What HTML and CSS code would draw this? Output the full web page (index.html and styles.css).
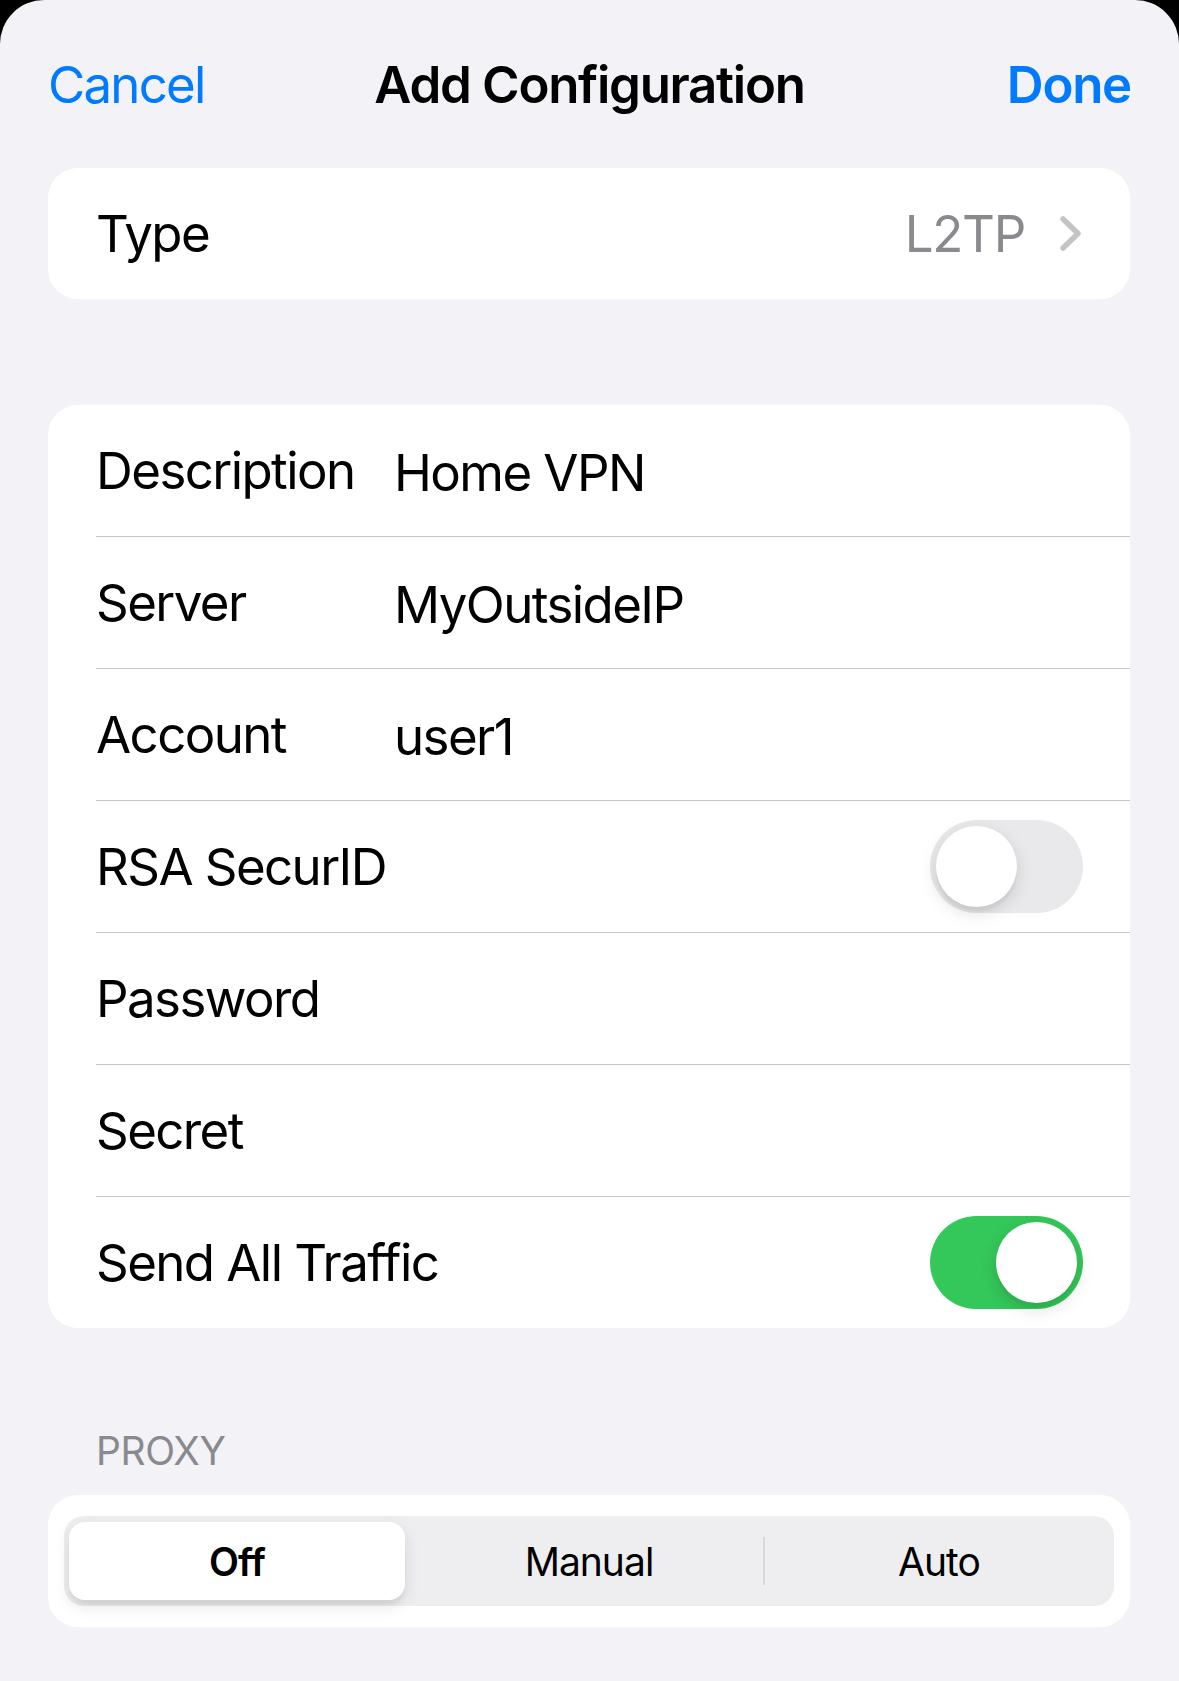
FILE: index.html
```html
<!DOCTYPE html>
<html lang="en">
<head>
<meta charset="utf-8">
<title>Add Configuration</title>
<link rel="stylesheet" href="styles.css">
</head>
<body>
<div class="sheet">
  <header class="nav">
    <span class="nav-btn nav-cancel">Cancel</span>
    <h1 class="nav-title">Add Configuration</h1>
    <span class="nav-btn nav-done">Done</span>
  </header>

  <section class="group">
    <div class="row">
      <span class="label">Type</span>
      <span class="detail">L2TP</span>
      <svg class="chevron" width="21" height="35" viewBox="0 0 21 35" aria-hidden="true">
        <polyline points="3,3 18,17.5 3,32" fill="none" stroke="#c4c4c7" stroke-width="5.5" stroke-linecap="round" stroke-linejoin="round"/>
      </svg>
    </div>
  </section>

  <section class="group group-fields">
    <div class="row">
      <span class="label">Description</span>
      <span class="value">Home VPN</span>
    </div>
    <div class="row">
      <span class="label">Server</span>
      <span class="value">MyOutsideIP</span>
    </div>
    <div class="row">
      <span class="label">Account</span>
      <span class="value">user1</span>
    </div>
    <div class="row">
      <span class="label label-wide">RSA SecurID</span>
      <span class="toggle"><span class="toggle-knob"></span></span>
    </div>
    <div class="row">
      <span class="label">Password</span>
    </div>
    <div class="row">
      <span class="label">Secret</span>
    </div>
    <div class="row">
      <span class="label label-wide">Send All Traffic</span>
      <span class="toggle toggle-on"><span class="toggle-knob"></span></span>
    </div>
  </section>

  <div class="section-header">PROXY</div>

  <section class="group group-seg">
    <div class="segmented">
      <div class="seg seg-selected">Off</div>
      <div class="seg">Manual</div>
      <div class="seg seg-divided">Auto</div>
    </div>
  </section>
</div>
</body>
</html>
```

FILE: styles.css
```css
html, body {
  margin: 0;
  padding: 0;
  background: #000;
}

body {
  width: 1179px;
  height: 1681px;
  overflow: hidden;
  font-family: Inter, "Noto Sans", "Liberation Sans", sans-serif;
  color: #000;
  -webkit-font-smoothing: antialiased;
}

.sheet {
  height: 1681px;
  background: #f2f2f7;
  border-radius: 44px 44px 0 0;
}

/* Navigation bar */
.nav {
  height: 168px;
  display: grid;
  grid-template-columns: 1fr auto 1fr;
  align-items: center;
  padding: 0 48px 0 48px;
  font-size: 51px;
  letter-spacing: -0.035em;
}

.nav-btn {
  color: #007aff;
}

.nav-cancel {
  justify-self: start;
}

.nav-done {
  justify-self: end;
  font-weight: 600;
  letter-spacing: -0.025em;
}

.nav-title {
  margin: 0;
  font-size: 51px;
  font-weight: 600;
  letter-spacing: -0.025em;
}

/* Grouped cards */
.group {
  background: #fff;
  border-radius: 30px;
  margin: 0 49px 0 48px;
}

.group-fields {
  margin-top: 106px;
}

.row {
  display: flex;
  align-items: center;
  height: 131px;
  margin-left: 48px;
  padding-right: 47px;
  font-size: 51px;
  line-height: 62px;
  letter-spacing: -0.031em;
}

.row + .row {
  border-top: 1px solid #c6c6c8;
}

.label {
  flex: 0 0 298px;
  white-space: nowrap;
}

.label-wide {
  flex: 1 1 auto;
}

.value {
  padding-top: 5px;
}

.detail {
  margin-left: auto;
  color: #8a8a8e;
  letter-spacing: -0.025em;
}

.chevron {
  flex: none;
  margin-left: 35px;
  margin-right: 2px;
}

/* Switches */
.toggle {
  position: relative;
  flex: none;
  margin-left: auto;
  width: 153px;
  height: 93px;
  border-radius: 47px;
  background: #e9e9eb;
}

.toggle-on {
  background: #34c759;
}

.toggle-knob {
  position: absolute;
  top: 6px;
  left: 6px;
  width: 81px;
  height: 81px;
  border-radius: 50%;
  background: #fff;
  box-shadow: 0 6px 18px rgba(0, 0, 0, 0.13), 0 5px 2px rgba(0, 0, 0, 0.04);
}

.toggle-on .toggle-knob {
  left: 66px;
}

/* Section header */
.section-header {
  padding: 100px 0 21px 96px;
  font-size: 39px;
  line-height: 46px;
  color: #8a8a8e;
  letter-spacing: -0.01em;
}

/* Segmented control */
.group-seg {
  padding: 21px 16px 21px 16px;
}

.segmented {
  display: grid;
  grid-template-columns: repeat(3, 1fr);
  height: 90px;
  background: #eeeef0;
  border-radius: 20px;
}

.seg {
  position: relative;
  display: flex;
  align-items: center;
  justify-content: center;
  font-size: 39px;
  letter-spacing: -0.025em;
}

.seg-selected {
  margin: 6px 9px 6px 5px;
  background: #fff;
  border-radius: 16px;
  font-weight: 600;
  box-shadow: 0 6px 16px rgba(0, 0, 0, 0.1), 0 5px 2px rgba(0, 0, 0, 0.04);
}

.seg-divided::before {
  content: "";
  position: absolute;
  left: -1px;
  top: 21px;
  bottom: 21px;
  width: 2px;
  background: #d8d8dc;
}
```
